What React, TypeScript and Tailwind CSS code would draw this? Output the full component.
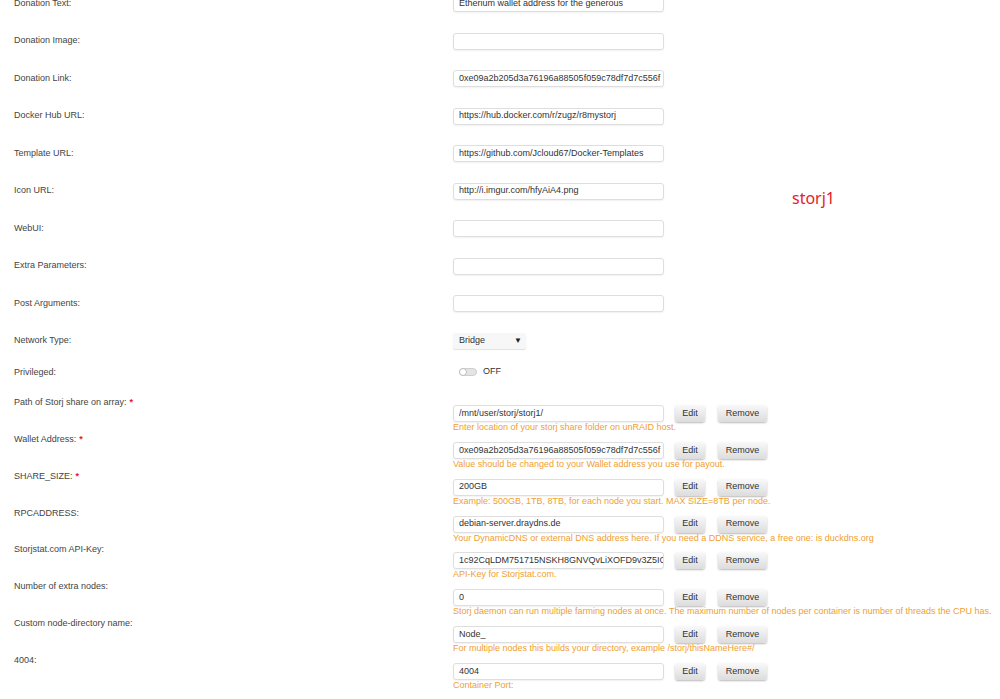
import React from 'react'

type PlainRow = {
  label: string
  kind: 'text' | 'select' | 'toggle'
  value?: string
}

type ConfigRow = {
  label: string
  value: string
  help: string
  required?: boolean
}

const plainRows: PlainRow[] = [
  { label: 'Donation Text:', kind: 'text', value: 'Etherium wallet address for the generous' },
  { label: 'Donation Image:', kind: 'text', value: '' },
  { label: 'Donation Link:', kind: 'text', value: '0xe09a2b205d3a76196a88505f059c78df7d7c556f' },
  { label: 'Docker Hub URL:', kind: 'text', value: 'https://hub.docker.com/r/zugz/r8mystorj' },
  { label: 'Template URL:', kind: 'text', value: 'https://github.com/Jcloud67/Docker-Templates' },
  { label: 'Icon URL:', kind: 'text', value: 'http://i.imgur.com/hfyAiA4.png' },
  { label: 'WebUI:', kind: 'text', value: '' },
  { label: 'Extra Parameters:', kind: 'text', value: '' },
  { label: 'Post Arguments:', kind: 'text', value: '' },
  { label: 'Network Type:', kind: 'select', value: 'Bridge' },
]

const configRows: ConfigRow[] = [
  {
    label: 'Path of Storj  share on array:',
    value: '/mnt/user/storj/storj1/',
    help: 'Enter location of your storj share folder on unRAID host.',
    required: true,
  },
  {
    label: 'Wallet Address:',
    value: '0xe09a2b205d3a76196a88505f059c78df7d7c556f',
    help: 'Value should be changed to your Wallet address you use for payout.',
    required: true,
  },
  {
    label: 'SHARE_SIZE:',
    value: '200GB',
    help: 'Example: 500GB, 1TB, 8TB, for each node you start. MAX SIZE=8TB per node.',
    required: true,
  },
  {
    label: 'RPCADDRESS:',
    value: 'debian-server.draydns.de',
    help: 'Your DynamicDNS or external DNS address here. If you need a DDNS service, a free one: is duckdns.org',
  },
  {
    label: 'Storjstat.com API-Key:',
    value: '1c92CqLDM751715NSKH8GNVQvLiXOFD9v3Z5ICk',
    help: 'API-Key for Storjstat.com.',
  },
  {
    label: 'Number of extra nodes:',
    value: '0',
    help: 'Storj daemon can run multiple farming nodes at once. The maximum number of nodes per container is number of threads the CPU has.',
  },
  {
    label: 'Custom node-directory name:',
    value: 'Node_',
    help: 'For multiple nodes this builds your directory, example /storj/thisNameHere#/',
  },
  {
    label: '4004:',
    value: '4004',
    help: 'Container Port:',
  },
]

function TextBox({ value }: { value: string }) {
  return (
    <div className="w-[211px] h-[17px] flex items-center px-[5px] border border-[#dedede] rounded-[3px] bg-white shadow-[0_1px_2px_rgba(0,0,0,0.06)] overflow-hidden whitespace-nowrap text-[#333]">
      {value}
    </div>
  )
}

function GrayButton({ children, width }: { children: React.ReactNode; width: string }) {
  return (
    <div
      className={`${width} h-[17px] flex items-center justify-center rounded-[3px] bg-gradient-to-b from-[#f9f9f9] to-[#dcdcdc] shadow-[0_1px_2px_rgba(0,0,0,0.28)] text-[#333]`}
    >
      {children}
    </div>
  )
}

function Asterisk() {
  return <span className="ml-[3px] text-[#e01b1b] font-bold">*</span>
}

export default function App() {
  return (
    <div
      className="relative min-h-[699px] bg-white text-[9px] text-[#444] overflow-hidden"
      style={{ fontFamily: '"Liberation Sans", Arial, sans-serif' }}
    >
      <div className="-mt-[15.25px] pl-[14px]">
        {plainRows.map((row) => (
          <div key={row.label} className="flex items-center h-[37.5px]">
            <div className="w-[439px] shrink-0">{row.label}</div>
            {row.kind === 'text' && <TextBox value={row.value ?? ''} />}
            {row.kind === 'select' && (
              <div className="w-[73px] h-[16px] flex items-center justify-between pl-[6px] pr-[4px] bg-[#f7f7f7] rounded-[2px] shadow-[0_1px_1px_rgba(0,0,0,0.12)] text-[#333]">
                <span>{row.value}</span>
                <span className="text-[8px] text-[#222]">▼</span>
              </div>
            )}
          </div>
        ))}

        {/* Privileged switch */}
        <div className="flex items-start h-[36.25px] pt-[6px]">
          <div className="w-[439px] shrink-0 leading-[12px]">Privileged:</div>
          <div className="flex items-center h-[12px] pl-[6px] gap-[6px]">
            <div className="relative w-[18px] h-[8px] rounded-full bg-[#e4e4e4] border border-[#cfcfcf]">
              <div className="absolute -left-[1px] -top-[1px] w-[8px] h-[8px] rounded-full bg-white border border-[#bdbdbd]" />
            </div>
            <span className="text-[#333]">OFF</span>
          </div>
        </div>

        {configRows.map((row) => (
          <div key={row.label} className="flex items-start h-[36.86px]">
            <div className="w-[439px] shrink-0 leading-[12px]">
              {row.label}
              {row.required && <Asterisk />}
            </div>
            <div className="flex flex-col pt-[9px]">
              <div className="flex items-center">
                <TextBox value={row.value} />
                <div className="ml-[11px]">
                  <GrayButton width="w-[30px]">Edit</GrayButton>
                </div>
                <div className="ml-[13px]">
                  <GrayButton width="w-[49px]">Remove</GrayButton>
                </div>
              </div>
              <div className="leading-[11px] whitespace-nowrap text-[#f0a030]">{row.help}</div>
            </div>
          </div>
        ))}
      </div>

      <div
        className="absolute left-[792px] top-[186px] text-[16px] text-[#e8202a]"
        style={{ fontFamily: '"Noto Sans", "Noto Sans CJK SC", sans-serif' }}
      >
        storj1
      </div>
    </div>
  )
}
